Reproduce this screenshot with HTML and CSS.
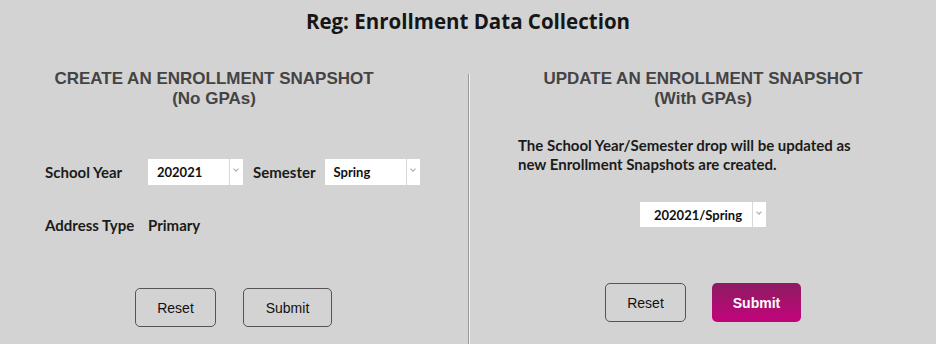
FILE: index.html
```html
<!DOCTYPE html>
<html lang="en">
<head>
    <meta charset="UTF-8">
    <meta name="viewport" content="width=device-width, initial-scale=1.0">
    <title>Reg: Enrollment Data Collection</title>
    <link rel="stylesheet" href="styles.css">
</head>
<body>
    <h1 class="page-title">Reg: Enrollment Data Collection</h1>

    <div class="panels">
        <section class="panel panel-create">
            <h2 class="panel-heading heading-create">CREATE AN ENROLLMENT SNAPSHOT<br>(No GPAs)</h2>

            <div class="field-row row-year">
                <span class="field-label">School Year</span>
                <div class="select-box">
                    <span class="select-value">202021</span>
                    <span class="select-arrow"></span>
                </div>
                <span class="field-label semester-label">Semester</span>
                <div class="select-box">
                    <span class="select-value">Spring</span>
                    <span class="select-arrow"></span>
                </div>
            </div>

            <div class="field-row row-address">
                <span class="field-label">Address Type</span>
                <span class="field-value">Primary</span>
            </div>

            <div class="actions actions-create">
                <button class="btn">Reset</button>
                <button class="btn btn-submit">Submit</button>
            </div>
        </section>

        <div class="divider"></div>

        <section class="panel panel-update">
            <h2 class="panel-heading">UPDATE AN ENROLLMENT SNAPSHOT<br>(With GPAs)</h2>

            <p class="note">The School Year/Semester drop will be updated as new Enrollment Snapshots are created.</p>

            <div class="snapshot-select">
                <div class="select-box select-wide">
                    <span class="select-value">202021/Spring</span>
                    <span class="select-arrow"></span>
                </div>
            </div>

            <div class="actions actions-update">
                <button class="btn">Reset</button>
                <button class="btn btn-primary">Submit</button>
            </div>
        </section>
    </div>
</body>
</html>
```

FILE: styles.css
```css
body {
    margin: 0;
    background: #d3d3d3;
    font-family: Lato, "Open Sans", sans-serif;
    color: #1b1b1b;
    height: 344px;
    overflow: hidden;
}
.page-title {
    margin: 0;
    padding-top: 8px;
    height: 26px;
    line-height: 26px;
    font-family: "Open Sans", Lato, sans-serif;
    font-size: 20.5px;
    font-weight: 700;
    text-align: center;
    color: #161616;
}
.panels {
    display: flex;
    margin-top: 35px;
    height: 275px;
}
.panel {
    box-sizing: border-box;
}
.panel-create {
    width: 468px;
}
.panel-update {
    flex: 1;
}
.divider {
    width: 1px;
    margin-top: 5px;
    background: #9a9a9a;
    border-right: 1px solid #f2f2f2;
}
.panel-heading {
    margin: 0;
    font-family: "Liberation Sans", Arial, sans-serif;
    font-size: 17px;
    line-height: 20px;
    font-weight: 700;
    color: #444;
    text-align: center;
}
.heading-create {
    padding-right: 40px;
}
.field-row {
    display: flex;
    align-items: center;
    padding-left: 45px;
    font-size: 15px;
    font-weight: 700;
}
.row-year {
    margin-top: 50px;
}
.row-address {
    margin-top: 27px;
    height: 26px;
}
.field-label {
    width: 103px;
}
.semester-label {
    width: auto;
    margin: 0 9px 0 10px;
}
.select-box {
    display: flex;
    width: 95px;
    height: 26px;
    background: #fff;
    box-sizing: border-box;
}
.select-value {
    flex: 1;
    display: flex;
    align-items: center;
    padding-left: 9px;
    font-size: 13px;
    font-weight: 700;
    color: #111;
}
.select-arrow {
    width: 13px;
    border-left: 1px solid #d8d8d8;
    position: relative;
}
.select-arrow::after {
    content: "";
    position: absolute;
    left: 4px;
    top: 8px;
    width: 3px;
    height: 3px;
    border-right: 1px solid #a8a8a8;
    border-bottom: 1px solid #a8a8a8;
    transform: rotate(45deg);
}
.actions {
    display: flex;
    justify-content: center;
}
.actions-create {
    margin-top: 50px;
    padding-right: 1px;
    gap: 27px;
}
.actions-update {
    margin-top: 56px;
    gap: 26px;
}
.btn {
    height: 39px;
    width: 81px;
    border: 1px solid #555;
    border-radius: 5px;
    background: transparent;
    font-family: "Liberation Sans", Arial, sans-serif;
    font-size: 14px;
    color: #111;
    padding: 0;
    cursor: pointer;
}
.btn-submit {
    width: 89px;
}
.btn-primary {
    width: 89px;
    border: none;
    color: #fff;
    font-weight: 700;
    background: linear-gradient(to bottom, #8c1d62, #c3037c);
}
.note {
    margin: 27px 0 0 48px;
    width: 350px;
    font-size: 15px;
    line-height: 19px;
    font-weight: 700;
}
.snapshot-select {
    display: flex;
    justify-content: center;
    margin-top: 28px;
}
.select-wide {
    width: 126px;
    height: 25px;
}
.select-wide .select-value {
    justify-content: center;
    padding-left: 4px;
}
```
